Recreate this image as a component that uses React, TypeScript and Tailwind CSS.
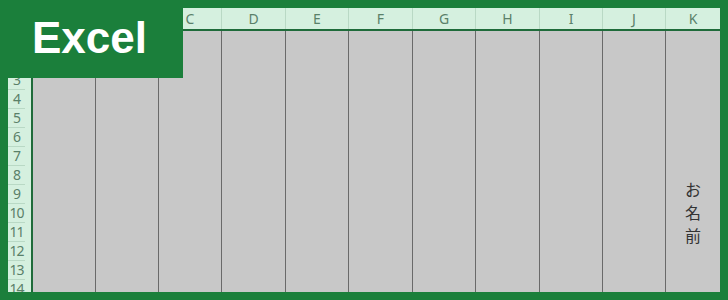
import React from 'react';

const cols = [
  { label: '', w: 'w-[63px]' },
  { label: '', w: 'w-[63px]' },
  { label: 'C', w: 'w-[63px]' },
  { label: 'D', w: 'w-[64px]' },
  { label: 'E', w: 'w-[63px]' },
  { label: 'F', w: 'w-[64px]' },
  { label: 'G', w: 'w-[63px]' },
  { label: 'H', w: 'w-[64px]' },
  { label: 'I', w: 'w-[63px]' },
  { label: 'J', w: 'w-[63px]' },
];

// 1,2行目はロゴの下に隠れる
const rows = Array.from({ length: 14 }, (_, i) => i + 1);

const App: React.FC = () => {
  return (
    <div className="relative w-[728px] h-[300px] bg-[#1b7f3b] p-[8px] overflow-hidden font-['Noto_Sans',sans-serif]">
      {/* シート */}
      <div className="w-[712px] h-[284px] flex flex-col overflow-hidden bg-[#c8c8c8]">
        {/* 列見出し */}
        <div className="flex h-[23px] shrink-0 bg-[#d5f0df] border-b-2 border-[#1f6b3a] text-[14px] leading-[21px] text-[#5a8069]">
          <div className="w-[25px] shrink-0 border-r border-[#b9d9c5]" />
          {cols.map((c, i) => (
            <div key={i} className={`${c.w} shrink-0 text-center border-r border-[#b9d9c5]`}>
              {c.label}
            </div>
          ))}
          <div className="flex-1 text-center">K</div>
        </div>

        {/* 本体 */}
        <div className="flex flex-1 min-h-0">
          {/* 行見出し */}
          <div className="w-[25px] shrink-0 bg-[#d5f0df] border-r-2 border-[#1f6b3a] flex flex-col text-[14px] text-[#5a8069]">
            {rows.map(r => (
              <div
                key={r}
                className={`${r === 1 ? 'h-[21px]' : 'h-[19px]'} shrink-0 border-b border-[#b9d9c5] leading-[18px] w-[17px] text-center tracking-[-1px]`}
              >
                {r > 2 ? r : ''}
              </div>
            ))}
          </div>
          {cols.map((c, i) => (
            <div key={i} className={`${c.w} shrink-0 border-r border-[#6a6a6a]`} />
          ))}
          <div className="flex-1 flex flex-col items-center pt-[147px] text-[16px] leading-[23px] text-[#333] font-['Noto_Sans_CJK_JP',sans-serif]">
            <span>お</span>
            <span>名</span>
            <span>前</span>
          </div>
        </div>
      </div>

      {/* ロゴ */}
      <div className="absolute top-0 left-0 w-[183px] h-[78px] bg-[#1b7f3b]">
        <div className="absolute left-[32px] top-[16px] text-[44px] leading-none font-bold text-white font-['Liberation_Sans',sans-serif]">
          Excel
        </div>
      </div>
    </div>
  );
};

export default App;
